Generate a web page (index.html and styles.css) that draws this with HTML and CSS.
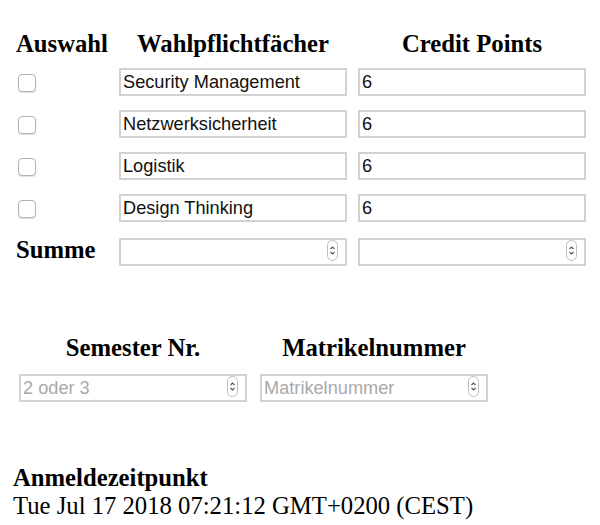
FILE: index.html
```html
<!DOCTYPE html>
<html lang="de">
<head>
<meta charset="utf-8">
<title>Wahlpflichtfächer</title>
<link rel="stylesheet" href="styles.css">
</head>
<body>
<main class="page">
  <section class="courses">
    <div class="grid heads">
      <div class="th">Auswahl</div>
      <div class="th">Wahlpflichtfächer</div>
      <div class="th">Credit Points</div>
    </div>
    <div class="grid rows">
      <div class="cell"><input type="checkbox" class="check"></div>
      <input class="field" type="text" value="Security Management">
      <input class="field" type="text" value="6">

      <div class="cell"><input type="checkbox" class="check"></div>
      <input class="field" type="text" value="Netzwerksicherheit">
      <input class="field" type="text" value="6">

      <div class="cell"><input type="checkbox" class="check"></div>
      <input class="field" type="text" value="Logistik">
      <input class="field" type="text" value="6">

      <div class="cell"><input type="checkbox" class="check"></div>
      <input class="field" type="text" value="Design Thinking">
      <input class="field" type="text" value="6">

      <div class="cell label">Summe</div>
      <div class="num">
        <input class="field" type="number">
        <span class="spin"><svg width="11" height="21" viewBox="0 0 11 21"><rect x="0.5" y="0.5" width="10" height="20" rx="5" fill="#fff" stroke="#bdbdbd"/><path d="M3.5 9 L5.5 7 L7.5 9" fill="none" stroke="#555" stroke-width="1.1"/><path d="M3.5 12 L5.5 14 L7.5 12" fill="none" stroke="#555" stroke-width="1.1"/></svg></span>
      </div>
      <div class="num">
        <input class="field" type="number">
        <span class="spin"><svg width="11" height="21" viewBox="0 0 11 21"><rect x="0.5" y="0.5" width="10" height="20" rx="5" fill="#fff" stroke="#bdbdbd"/><path d="M3.5 9 L5.5 7 L7.5 9" fill="none" stroke="#555" stroke-width="1.1"/><path d="M3.5 12 L5.5 14 L7.5 12" fill="none" stroke="#555" stroke-width="1.1"/></svg></span>
      </div>
    </div>
  </section>

  <section class="student">
    <div class="grid2 heads">
      <div class="th">Semester Nr.</div>
      <div class="th">Matrikelnummer</div>
    </div>
    <div class="grid2 inputs">
      <div class="num">
        <input class="field" type="number" placeholder="2 oder 3">
        <span class="spin"><svg width="11" height="21" viewBox="0 0 11 21"><rect x="0.5" y="0.5" width="10" height="20" rx="5" fill="#fff" stroke="#bdbdbd"/><path d="M3.5 9 L5.5 7 L7.5 9" fill="none" stroke="#555" stroke-width="1.1"/><path d="M3.5 12 L5.5 14 L7.5 12" fill="none" stroke="#555" stroke-width="1.1"/></svg></span>
      </div>
      <div class="num">
        <input class="field" type="number" placeholder="Matrikelnummer">
        <span class="spin"><svg width="11" height="21" viewBox="0 0 11 21"><rect x="0.5" y="0.5" width="10" height="20" rx="5" fill="#fff" stroke="#bdbdbd"/><path d="M3.5 9 L5.5 7 L7.5 9" fill="none" stroke="#555" stroke-width="1.1"/><path d="M3.5 12 L5.5 14 L7.5 12" fill="none" stroke="#555" stroke-width="1.1"/></svg></span>
      </div>
    </div>
  </section>

  <section class="stamp">
    <div class="stamp-title">Anmeldezeitpunkt</div>
    <div class="stamp-value">Tue Jul 17 2018 07:21:12 GMT+0200 (CEST)</div>
  </section>
</main>
</body>
</html>
```

FILE: styles.css
```css
html, body {
  margin: 0;
  padding: 0;
  background: #fff;
}

body {
  font-family: "Liberation Serif", "Times New Roman", serif;
  font-size: 24.7px;
  color: #000;
}

.page {
  padding-top: 30px;
}

.grid {
  display: grid;
  grid-template-columns: 92px 228px 228px;
  column-gap: 11px;
  margin-left: 16px;
}

.grid2 {
  display: grid;
  grid-template-columns: 228px 228px;
  column-gap: 13px;
  margin-left: 19px;
}

.th {
  font-weight: bold;
  text-align: center;
  line-height: 28px;
  white-space: nowrap;
}

.rows {
  margin-top: 10px;
  row-gap: 14px;
  grid-auto-rows: 28px;
}

.cell {
  display: flex;
  align-items: center;
}

.label {
  font-weight: bold;
  line-height: 28px;
}

.check {
  -webkit-appearance: none;
  appearance: none;
  width: 18px;
  height: 18px;
  margin: 1px 0 0 2px;
  border: 1px solid #b3b3b3;
  border-radius: 4px;
  background: #fff;
  box-shadow: 0 1px 1px rgba(0, 0, 0, 0.12);
}

.field {
  box-sizing: border-box;
  width: 100%;
  height: 28px;
  margin: 0;
  padding: 1px 2px 0;
  border: 2px solid #d2d2d2;
  border-radius: 0;
  background: #fff;
  font-family: "Liberation Sans", Arial, sans-serif;
  font-size: 18.2px;
  color: #111;
  outline: none;
}

.field::placeholder {
  color: #a9a9a9;
}

input[type=number] {
  -moz-appearance: textfield;
}

input[type=number]::-webkit-inner-spin-button,
input[type=number]::-webkit-outer-spin-button {
  -webkit-appearance: none;
  margin: 0;
}

.num {
  position: relative;
  height: 28px;
}

.spin {
  position: absolute;
  right: 9px;
  top: 4px;
  width: 11px;
  height: 21px;
  display: block;
  line-height: 0;
}

.student {
  margin-top: 70px;
}

.inputs {
  margin-top: 10px;
}

.stamp {
  margin-top: 64px;
  margin-left: 13px;
}

.stamp-title {
  font-weight: bold;
}
```
